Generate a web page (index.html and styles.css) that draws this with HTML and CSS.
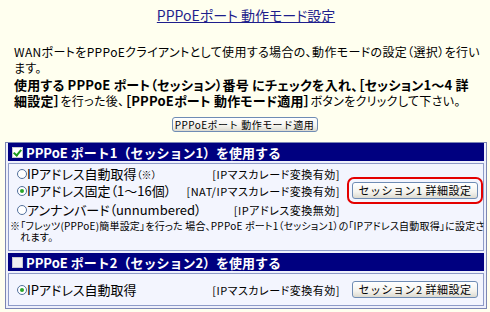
FILE: index.html
```html
<!DOCTYPE html>
<html lang="ja">
<head>
    <meta charset="UTF-8">
    <title>PPPoEポート 動作モード設定</title>
    <link rel="stylesheet" href="styles.css">
</head>
<body>
    <h1 class="title"><a href="#">PPPoEポート 動作モード設定</a></h1>

    <p class="lead">WANポートをPPPoEクライアントとして使用する場合の、動作モードの設定（選択）を行い<br>ます。</p>
    <p class="lead guide"><b>使用する PPPoE ポート（セッション）番号 にチェックを入れ、［セッション1～4 詳</b><br><b>細設定］</b>を行った後、<b>［PPPoEポート 動作モード適用］</b>ボタンをクリックして下さい。</p>

    <div class="apply-row">
        <button class="btn apply-btn">PPPoEポート 動作モード適用</button>
    </div>

    <div class="port-table">
        <!-- Port 1 -->
        <div class="port-head"><span class="check on"></span>PPPoE ポート1（セッション1）を使用する</div>
        <div class="port-body">
            <div class="mode-row">
                <span class="radio"></span><span class="label">IPアドレス自動取得<small>（※）</small></span>
                <span class="nat">[IPマスカレード変換有効]</span>
                <span></span>
            </div>
            <div class="mode-row">
                <span class="radio on"></span><span class="label">IPアドレス固定（1～16個）</span>
                <span class="nat">[NAT/IPマスカレード変換有効]</span>
                <span class="btn-cell">
                    <button class="btn detail-btn">セッション1 詳細設定</button>
                    <span class="marker"></span>
                </span>
            </div>
            <div class="mode-row">
                <span class="radio"></span><span class="label">アンナンバード（unnumbered）</span>
                <span class="nat">[IPアドレス変換無効]</span>
                <span></span>
            </div>
            <p class="note">※「フレッツ(PPPoE)簡単設定」を行った 場合、PPPoE ポート1（セッション1）の「IPアドレス自動取得」に設定さ<br>　れます。</p>
        </div>

        <!-- Port 2 -->
        <div class="port-head"><span class="check"></span>PPPoE ポート2（セッション2）を使用する</div>
        <div class="port-body single">
            <div class="mode-row">
                <span class="radio on"></span><span class="label">IPアドレス自動取得</span>
                <span class="nat">[IPマスカレード変換有効]</span>
                <span class="btn-cell"><button class="btn detail-btn">セッション2 詳細設定</button></span>
            </div>
        </div>
    </div>
</body>
</html>
```

FILE: styles.css
```css
body {
    margin: 0;
    padding: 0 3px 0 5px;
    background-color: #ffffef;
    color: #000;
    font-family: "Noto Sans CJK JP", "Liberation Sans", sans-serif;
    height: 312px;
    overflow: hidden;
}

.title {
    margin: 0;
    padding-top: 6px;
    text-align: center;
    font-size: 14px;
    font-weight: normal;
    line-height: 18px;
}

.title a {
    color: #1e1e8c;
    text-decoration: underline;
    font-feature-settings: "palt";
}

.lead {
    margin: 0;
    padding-left: 9px;
    font-size: 12px;
    line-height: 16px;
    letter-spacing: 0.35px;
    white-space: nowrap;
    font-feature-settings: "palt";
}

.lead:first-of-type {
    margin-top: 20px;
}

.guide {
    margin-top: 1px;
}

.guide b {
    font-size: 13px;
    letter-spacing: 0.2px;
}

.apply-row {
    display: flex;
    justify-content: center;
    margin-top: 8px;
    padding-right: 3px;
}

.btn {
    font-family: "Noto Sans CJK JP", sans-serif;
    font-size: 10px;
    letter-spacing: 1px;
    color: #000;
    padding: 0;
    border: 1px solid #6f8cb4;
    border-radius: 3px;
    background: linear-gradient(#ffffff, #f4f3ee 60%, #dcdad0);
    line-height: 13px;
    white-space: nowrap;
    cursor: pointer;
}

.apply-btn {
    width: 146px;
    height: 15px;
    letter-spacing: 0.4px;
}

.port-table {
    margin-top: 10px;
    border: 1px solid #7c86b4;
    background-color: #eef0fb;
    padding: 0 2px 2px 2px;
    display: flex;
    flex-direction: column;
    gap: 2px;
}

.port-head {
    display: flex;
    align-items: center;
    height: 18px;
    background-color: #000080;
    color: #fff;
    font-size: 13px;
    font-weight: bold;
    padding-left: 4px;
    white-space: nowrap;
}

.check {
    width: 9px;
    height: 9px;
    margin-right: 3px;
    background-color: #f0f0f0;
    border: 1px solid #c8c8d0;
    position: relative;
}

.check.on {
    background-color: #fff;
}

.check.on::after {
    content: '';
    position: absolute;
    left: 2px;
    top: 0px;
    width: 3px;
    height: 6px;
    border: solid #1c9a1c;
    border-width: 0 2px 2px 0;
    transform: rotate(40deg);
}

.port-body {
    background-color: #f3f5fe;
    border: 1px solid #8e9bc8;
    padding: 0 5px 8px 4px;
}

.port-body.single {
    padding-top: 6px;
    padding-bottom: 6px;
}

.mode-row {
    display: grid;
    grid-template-columns: 12px 1fr auto 138px;
    align-items: center;
    height: 19px;
    white-space: nowrap;
}

.port-body .mode-row:first-child {
    height: 17px;
}

.port-body.single .mode-row:first-child {
    height: 19px;
}

.radio {
    width: 8px;
    height: 8px;
    margin-left: 4px;
    border: 1px solid #52709c;
    border-radius: 50%;
    background-color: #fff;
    position: relative;
}

.radio.on::after {
    content: '';
    position: absolute;
    left: 2px;
    top: 2px;
    width: 4px;
    height: 4px;
    border-radius: 50%;
    background-color: #2aa52a;
}

.label {
    font-size: 13px;
    padding-left: 2px;
    font-feature-settings: "palt";
}

.label small {
    font-size: 10px;
}

.nat {
    font-size: 11px;
    letter-spacing: 0.5px;
    text-align: right;
    font-feature-settings: "palt";
}

.btn-cell {
    position: relative;
    display: flex;
    justify-content: flex-end;
}

.detail-btn {
    width: 126px;
    height: 17px;
    font-size: 11px;
    letter-spacing: 0.5px;
}

.marker {
    position: absolute;
    left: 7px;
    right: -5px;
    top: -5px;
    bottom: -5px;
    border: 2px solid #e40000;
    border-radius: 7px;
    pointer-events: none;
}

.note {
    margin: 1px 0 0 -3px;
    font-size: 10px;
    line-height: 11px;
    letter-spacing: 0.2px;
    white-space: nowrap;
    font-feature-settings: "palt";
}
```
